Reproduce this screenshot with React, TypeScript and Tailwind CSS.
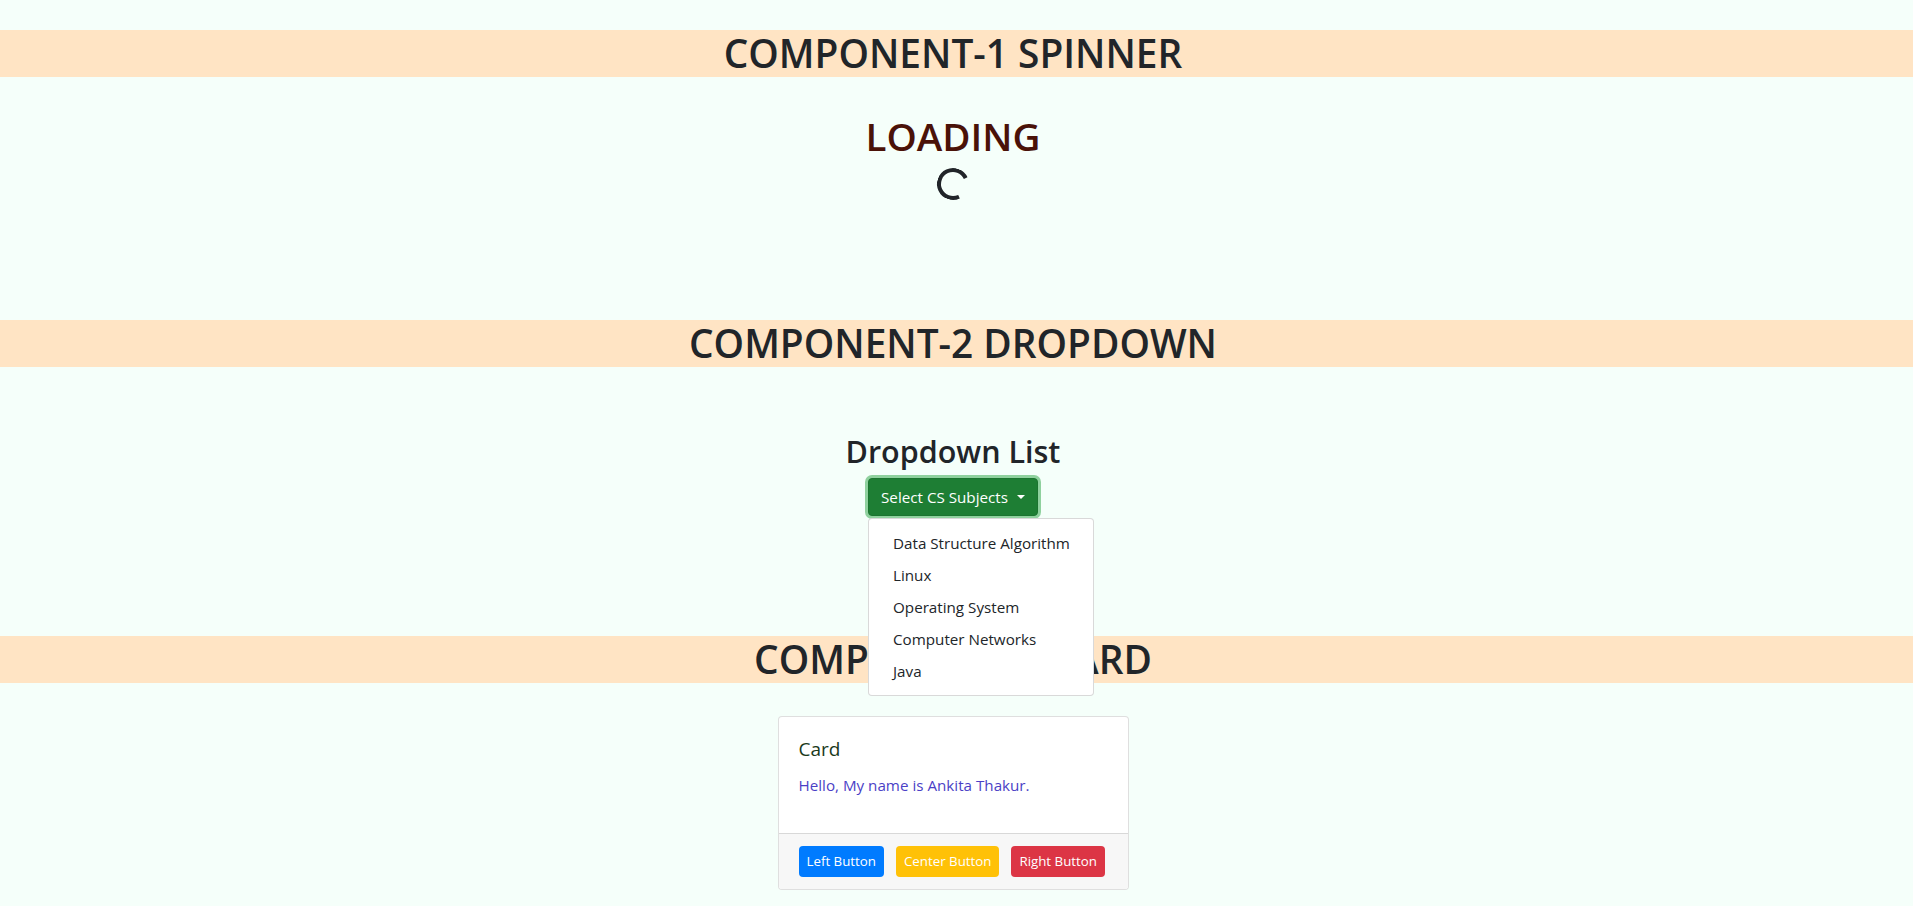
import { useState } from 'react';

const subjects = [
  'Data Structure Algorithm',
  'Linux',
  'Operating System',
  'Computer Networks',
  'Java',
];

const Band = ({ title }: { title: string }) => (
  <h1 className="bg-[#ffe4c4] pr-[7px] text-center text-[38.8px] leading-[47px] font-semibold text-[#212529]">
    {title}
  </h1>
);

const App = () => {
  const [open] = useState(true);

  return (
    <div
      className="min-h-[906px] bg-[#f5fffa] pt-[30px] text-[#212529]"
      style={{ fontFamily: '"Open Sans", "Noto Sans", sans-serif' }}
    >
      {/* spinner section */}
      <Band title="COMPONENT-1 SPINNER" />
      <div className="flex h-[243px] flex-col items-center pt-[35px] pr-[7px]">
        <h1 className="text-[38.6px] leading-[48px] font-semibold text-[#4a1208]">LOADING</h1>
        <div className="mt-[8px] h-8 w-8 rotate-[20deg] rounded-full border-4 border-[#212529] border-r-transparent" />
      </div>

      {/* dropdown section */}
      <Band title="COMPONENT-2 DROPDOWN" />
      <div className="relative z-10 flex h-[269px] flex-col items-center pt-[65px] pr-[7px]">
        <h2 className="text-[30.5px] leading-[38px] font-semibold">Dropdown List</h2>
        <div className="relative mt-[8px]">
          <button className="flex items-center gap-[9px] whitespace-nowrap rounded-[4px] border border-[#1c7430] bg-[#1e7e34] px-3 py-[6px] text-[15.2px] leading-6 text-white shadow-[0_0_0_3px_#8fd19e]">
            <span>Select CS Subjects</span>
            <span className="h-0 w-0 border-x-[4px] border-t-[4px] border-x-transparent border-t-white" />
          </button>
          {open && (
            <div className="absolute left-0 top-[40px] w-[226px] rounded-[4px] border border-[#00000026] bg-white py-2">
              {subjects.map((s) => (
                <div key={s} className="whitespace-nowrap px-6 py-1 text-[15.2px] leading-6 text-[#212529]">
                  {s}
                </div>
              ))}
            </div>
          )}
        </div>
      </div>

      {/* card section */}
      <Band title="COMPONENT-3 CARD" />
      <div className="flex justify-center pt-[33px] pb-4 pr-[7px]">
        <div className="w-[351px] overflow-hidden rounded-[4px] border border-[#00000020] bg-white">
          <div className="px-5 pt-5 pb-9">
            <h5 className="mb-3 text-[19px] leading-6 font-medium text-[#1b3a1b]">Card</h5>
            <p className="text-[15.2px] leading-6 text-[#4b3fc6]">Hello, My name is Ankita Thakur.</p>
          </div>
          <div className="flex gap-3 border-t border-[#00000020] bg-[#f7f7f7] px-5 py-3">
            <button className="whitespace-nowrap rounded-[4px] bg-[#007bff] px-2 py-1 text-[13.3px] leading-[23px] text-white">Left Button</button>
            <button className="whitespace-nowrap rounded-[4px] bg-[#ffc107] px-2 py-1 text-[13.3px] leading-[23px] text-white">Center Button</button>
            <button className="whitespace-nowrap rounded-[4px] bg-[#dc3545] px-2 py-1 text-[13.3px] leading-[23px] text-white">Right Button</button>
          </div>
        </div>
      </div>
    </div>
  );
};

export default App;
